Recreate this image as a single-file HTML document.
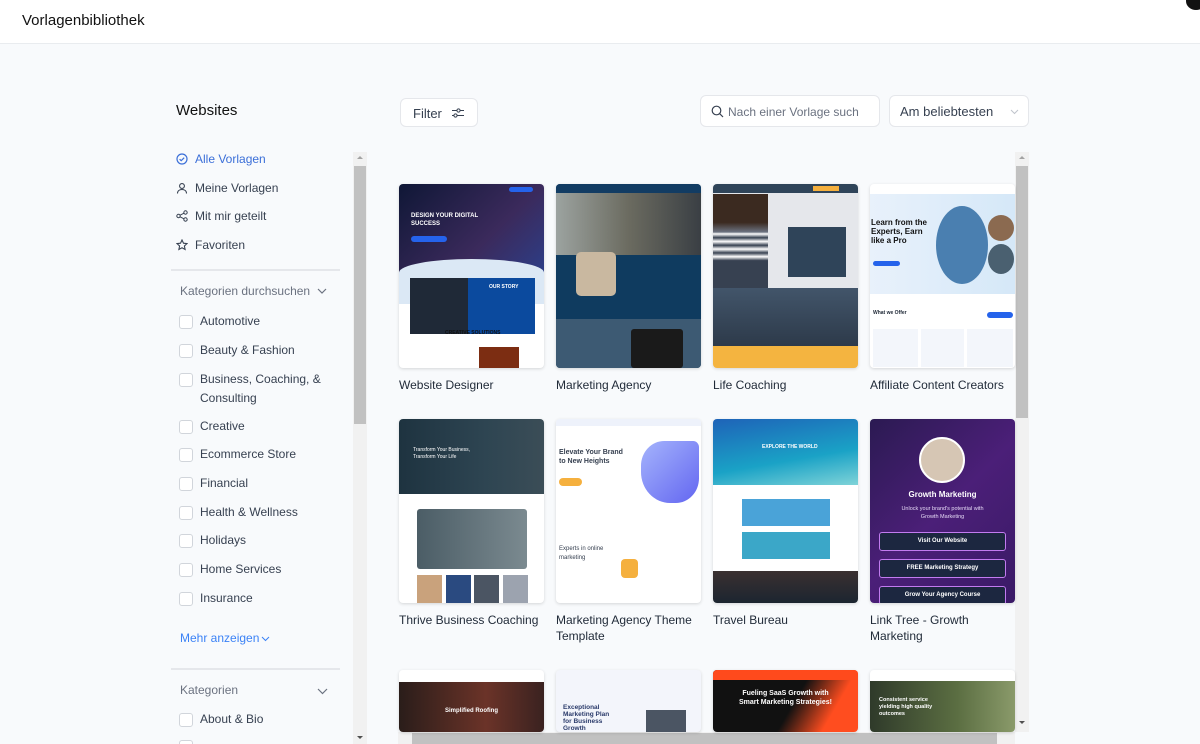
<!DOCTYPE html>
<html style="height:744px;overflow:hidden"><head><meta charset="utf-8"><style>
*{box-sizing:border-box;margin:0;padding:0}
html,body{overflow:hidden}
body{width:1200px;height:744px;background:#f8fafc;font-family:"Liberation Sans",sans-serif;color:#1f2937;position:relative}
.hdr{position:absolute;left:0;top:0;width:1200px;height:44px;background:#fff;border-bottom:1px solid #e9ecef}
.hdr span{position:absolute;left:22px;top:12px;font-size:15px;color:#111}
.abs{position:absolute}
.nav{position:absolute;left:176px;font-size:12px;color:#374151;display:flex;align-items:center;gap:7px}
.cb{position:absolute;left:179px;width:14px;height:14px;border:1px solid #d1d5db;border-radius:3px;background:#fff}
.cbl{position:absolute;left:200px;font-size:12px;color:#374151;line-height:19px}
.hr{position:absolute;left:171px;width:169px;height:2px;background:#e5e7eb}
.card{position:absolute;width:145px;height:184px;border-radius:4px;overflow:hidden;box-shadow:0 1px 3px rgba(0,0,0,.15)}
.lbl{position:absolute;font-size:12px;color:#1f2937;line-height:16px;width:150px}
.btn{position:absolute;background:#fff;border:1px solid #e5e7eb;border-radius:6px}
</style></head><body>
<div class="hdr"><span>Vorlagenbibliothek</span></div>
<div class="abs" style="left:1186px;top:-8px;width:20px;height:18px;border-radius:50%;background:#111"></div>

<div class="abs" style="left:176px;top:102px;font-size:15px;color:#111">Websites</div>
<div class="nav" style="top:152px;color:#3b6fd8"><svg width="12" height="12" viewBox="0 0 12 12"><circle cx="6" cy="6" r="5" fill="none" stroke="#3b6fd8" stroke-width="1.2"/><path d="M3.6 6.2l1.6 1.5 3-3" fill="none" stroke="#3b6fd8" stroke-width="1.2"/></svg>Alle Vorlagen</div>
<div class="nav" style="top:181px"><svg width="12" height="12" viewBox="0 0 12 12"><circle cx="6" cy="4" r="2.4" fill="none" stroke="#374151" stroke-width="1.1"/><path d="M1.5 11.5c0-2.6 2-4 4.5-4s4.5 1.4 4.5 4" fill="none" stroke="#374151" stroke-width="1.1"/></svg>Meine Vorlagen</div>
<div class="nav" style="top:209px"><svg width="12" height="12" viewBox="0 0 12 12"><circle cx="2.5" cy="6" r="1.7" fill="none" stroke="#374151"/><circle cx="9.5" cy="2.5" r="1.7" fill="none" stroke="#374151"/><circle cx="9.5" cy="9.5" r="1.7" fill="none" stroke="#374151"/><path d="M4 5.2l4-2M4 6.8l4 2" stroke="#374151"/></svg>Mit mir geteilt</div>
<div class="nav" style="top:238px"><svg width="12" height="12" viewBox="0 0 12 12"><path d="M6 1l1.5 3.2 3.5.4-2.6 2.4.7 3.5L6 8.8 2.9 10.5l.7-3.5L1 4.6l3.5-.4z" fill="none" stroke="#374151" stroke-width="1.1"/></svg>Favoriten</div>
<div class="hr" style="top:269px"></div>
<div class="abs" style="left:180px;top:284px;font-size:12px;color:#6b7280">Kategorien durchsuchen <svg width="10" height="8" viewBox="0 0 10 8" style="margin-left:4px"><path d="M1 2l4 4 4-4" fill="none" stroke="#6b7280" stroke-width="1.2"/></svg></div>
<div class="cb" style="top:315px"></div><div class="cbl" style="top:312px">Automotive</div>
<div class="cb" style="top:344px"></div><div class="cbl" style="top:341px">Beauty &amp; Fashion</div>
<div class="cb" style="top:373px"></div><div class="cbl" style="top:370px">Business, Coaching, &amp;<br>Consulting</div>
<div class="cb" style="top:420px"></div><div class="cbl" style="top:417px">Creative</div>
<div class="cb" style="top:448px"></div><div class="cbl" style="top:445px">Ecommerce Store</div>
<div class="cb" style="top:477px"></div><div class="cbl" style="top:474px">Financial</div>
<div class="cb" style="top:506px"></div><div class="cbl" style="top:503px">Health &amp; Wellness</div>
<div class="cb" style="top:534px"></div><div class="cbl" style="top:531px">Holidays</div>
<div class="cb" style="top:563px"></div><div class="cbl" style="top:560px">Home Services</div>
<div class="cb" style="top:592px"></div><div class="cbl" style="top:589px">Insurance</div>
<div class="abs" style="left:180px;top:631px;font-size:12px;color:#3b82f6">Mehr anzeigen<svg width="9" height="7" viewBox="0 0 9 7" style="margin-left:2px"><path d="M1 2l3.5 3.5L8 2" fill="none" stroke="#3b82f6"/></svg></div>
<div class="hr" style="top:668px"></div>
<div class="abs" style="left:180px;top:683px;font-size:12px;color:#6b7280">Kategorien</div>
<svg class="abs" style="left:317px;top:687px" width="11" height="8" viewBox="0 0 11 8"><path d="M1 2l4.5 4.5L10 2" fill="none" stroke="#6b7280" stroke-width="1.2"/></svg>
<div class="cb" style="top:713px"></div><div class="cbl" style="top:710px">About &amp; Bio</div>
<div class="cb" style="top:740px;height:4px;border-bottom:0;border-radius:3px 3px 0 0"></div>

<div class="abs" style="left:353px;top:152px;width:14px;height:592px;background:#f1f1f1"></div>
<div class="abs" style="left:354px;top:166px;width:12px;height:258px;background:#c1c1c1"></div>
<div class="abs" style="left:357px;top:156px;width:0;height:0;border:3px solid transparent;border-bottom-color:#a3a3a3;border-top:0"></div>
<div class="abs" style="left:357px;top:736px;width:0;height:0;border:3px solid transparent;border-top-color:#505050;border-bottom:0"></div>

<div class="btn" style="left:400px;top:98px;width:78px;height:29px"><span class="abs" style="left:12px;top:7px;font-size:13px;color:#374151">Filter</span><svg class="abs" style="left:50px;top:8px" width="14" height="12" viewBox="0 0 14 12"><path d="M1 3.5h5M9 3.5h4M1 8.5h2M6 8.5h7" stroke="#374151" stroke-width="1.1"/><circle cx="7.5" cy="3.5" r="1.6" fill="none" stroke="#374151"/><circle cx="4.5" cy="8.5" r="1.6" fill="none" stroke="#374151"/></svg></div>
<div class="btn" style="left:700px;top:95px;width:180px;height:32px;overflow:hidden"><svg class="abs" style="left:10px;top:9px" width="13" height="13" viewBox="0 0 13 13"><circle cx="5.5" cy="5.5" r="4.3" fill="none" stroke="#374151" stroke-width="1.2"/><path d="M8.6 8.6l3.4 3.4" stroke="#374151" stroke-width="1.2"/></svg><span class="abs" style="left:27px;top:9px;font-size:12px;color:#6b7280;white-space:nowrap">Nach einer Vorlage such</span></div>
<div class="btn" style="left:889px;top:95px;width:140px;height:32px"><span class="abs" style="left:10px;top:8px;font-size:13px;color:#374151">Am beliebtesten</span><svg class="abs" style="left:120px;top:13px" width="9" height="6" viewBox="0 0 9 6"><path d="M1 1l3.5 3.5L8 1" fill="none" stroke="#c0c4cc"/></svg></div>

<div class="abs" style="left:1015px;top:152px;width:14px;height:580px;background:#f1f1f1"></div>
<div class="abs" style="left:1016px;top:166px;width:12px;height:252px;background:#c1c1c1"></div>
<div class="abs" style="left:1019px;top:156px;border:3px solid transparent;border-bottom-color:#a3a3a3;border-top:0"></div>
<div class="abs" style="left:1019px;top:721px;border:3px solid transparent;border-top-color:#505050;border-bottom:0"></div>
<div class="abs" style="left:398px;top:732px;width:617px;height:12px;background:#f1f1f1"></div>
<div class="abs" style="left:412px;top:733px;width:585px;height:11px;background:#c1c1c1"></div>

<div class="card" style="left:399px;top:184px;background:#fff">
 <div class="abs" style="left:0;top:0;width:145px;height:95px;background:linear-gradient(135deg,#0f1736,#3b2a5c 60%,#2c3f8a)"></div>
 <div class="abs" style="left:0;top:75px;width:145px;height:45px;background:#dbe8f5;border-radius:50% 50% 0 0/30% 30% 0 0"></div>
 <div class="abs" style="left:12px;top:28px;font-size:6px;color:#fff;font-weight:bold;line-height:8px">DESIGN YOUR DIGITAL<br>SUCCESS</div>
 <div class="abs" style="left:12px;top:52px;width:36px;height:6px;background:#2563eb;border-radius:3px"></div>
 <div class="abs" style="left:110px;top:3px;width:24px;height:5px;background:#2563eb;border-radius:3px"></div>
 <div class="abs" style="left:11px;top:94px;width:125px;height:56px;background:#0b4a9e"></div>
 <div class="abs" style="left:11px;top:94px;width:58px;height:56px;background:#1f2937"></div>
 <div class="abs" style="left:90px;top:100px;font-size:5px;color:#fff;font-weight:bold">OUR STORY</div>
 <div class="abs" style="left:46px;top:146px;font-size:5px;color:#111;font-weight:bold">CREATIVE SOLUTIONS</div>
 <div class="abs" style="left:80px;top:163px;width:40px;height:21px;background:#7c2d12"></div>
</div>
<div class="card" style="left:556px;top:184px;background:#0f3b5f">
 <div class="abs" style="left:0;top:0;width:145px;height:9px;background:#123c63"></div>
 <div class="abs" style="left:0;top:9px;width:145px;height:62px;background:linear-gradient(90deg,#9ca3a0,#6b6b60 50%,#3a3f44)"></div>
 <div class="abs" style="left:20px;top:68px;width:40px;height:44px;background:#c9b8a0;border-radius:5px"></div>
 <div class="abs" style="left:0;top:135px;width:145px;height:49px;background:#3d5a73"></div>
 <div class="abs" style="left:75px;top:145px;width:52px;height:39px;background:#1a1a1a;border-radius:3px"></div>
</div>
<div class="card" style="left:713px;top:184px;background:#e5e7eb">
 <div class="abs" style="left:0;top:0;width:145px;height:9px;background:#2f4459"></div>
 <div class="abs" style="left:100px;top:2px;width:26px;height:5px;background:#f5b03e"></div>
 <div class="abs" style="left:0;top:10px;width:55px;height:95px;background:linear-gradient(#3b2a20 30%,#6b7280 40%,#fff 42%,#374151 46%,#fff 50%,#374151 54%,#fff 58%,#374151 62%,#fff 66%,#374151 70%)"></div>
 <div class="abs" style="left:75px;top:43px;width:58px;height:50px;background:#2f4459"></div>
 <div class="abs" style="left:0;top:104px;width:145px;height:58px;background:linear-gradient(#42556a,#2d3a4a)"></div>
 <div class="abs" style="left:0;top:162px;width:145px;height:22px;background:#f4b440"></div>
</div>
<div class="card" style="left:870px;top:184px;background:#fff">
 <div class="abs" style="left:0;top:10px;width:145px;height:100px;background:linear-gradient(90deg,#e8f1fb,#d5e8f8)"></div>
 <div class="abs" style="left:1px;top:34px;font-size:8px;font-weight:bold;color:#111;line-height:9px">Learn from the<br>Experts, Earn<br>like a Pro</div>
 <div class="abs" style="left:3px;top:77px;width:27px;height:5px;background:#2563eb;border-radius:3px"></div>
 <div class="abs" style="left:66px;top:22px;width:52px;height:78px;background:#4a7fb0;border-radius:50%"></div>
 <div class="abs" style="left:118px;top:31px;width:26px;height:26px;background:#8b6a50;border-radius:50%"></div>
 <div class="abs" style="left:118px;top:60px;width:26px;height:30px;background:#4a6070;border-radius:50%"></div>
 <div class="abs" style="left:3px;top:126px;font-size:5px;font-weight:bold">What we Offer</div>
 <div class="abs" style="left:117px;top:128px;width:26px;height:6px;background:#2563eb;border-radius:3px"></div>
 <div class="abs" style="left:3px;top:145px;width:45px;height:38px;background:#f3f6fb"></div>
 <div class="abs" style="left:51px;top:145px;width:43px;height:38px;background:#f3f6fb"></div>
 <div class="abs" style="left:97px;top:145px;width:46px;height:38px;background:#f3f6fb"></div>
</div>
<div class="lbl" style="left:399px;top:377px">Website Designer</div>
<div class="lbl" style="left:556px;top:377px">Marketing Agency</div>
<div class="lbl" style="left:713px;top:377px">Life Coaching</div>
<div class="lbl" style="left:870px;top:377px">Affiliate Content Creators</div>

<div class="card" style="left:399px;top:419px;background:#fff">
 <div class="abs" style="left:0;top:0;width:145px;height:75px;background:linear-gradient(90deg,#1e3340,#2e4552 60%,#3b4d57)"></div>
 <div class="abs" style="left:14px;top:28px;font-size:5px;color:#fff;line-height:7px">Transform Your Business,<br>Transform Your Life</div>
 <div class="abs" style="left:18px;top:90px;width:110px;height:60px;background:linear-gradient(90deg,#4b5d66,#7b8a90);border-radius:3px"></div>
 <div class="abs" style="left:18px;top:156px;width:25px;height:28px;background:#c9a27c"></div>
 <div class="abs" style="left:47px;top:156px;width:25px;height:28px;background:#2a4a80"></div>
 <div class="abs" style="left:75px;top:156px;width:25px;height:28px;background:#4b5563"></div>
 <div class="abs" style="left:104px;top:156px;width:25px;height:28px;background:#9ca3af"></div>
</div>
<div class="card" style="left:556px;top:419px;background:#fff">
 <div class="abs" style="left:0;top:0;width:145px;height:7px;background:#eef2fb"></div>
 <div class="abs" style="left:3px;top:29px;font-size:7px;font-weight:bold;color:#374151;line-height:9px">Elevate Your Brand<br>to New Heights</div>
 <div class="abs" style="left:3px;top:59px;width:23px;height:8px;background:#f5b03e;border-radius:4px"></div>
 <div class="abs" style="left:85px;top:22px;width:58px;height:62px;background:linear-gradient(135deg,#a5b4fc,#6366f1);border-radius:40% 10% 40% 50%"></div>
 <div class="abs" style="left:3px;top:126px;font-size:6px;color:#374151;line-height:9px">Experts in online<br>marketing</div>
 <div class="abs" style="left:65px;top:140px;width:17px;height:19px;background:#f5b03e;border-radius:4px"></div>
</div>
<div class="card" style="left:713px;top:419px;background:#fff">
 <div class="abs" style="left:0;top:0;width:145px;height:66px;background:linear-gradient(170deg,#1e63b8,#1aa2c6 60%,#7fd3d8)"></div>
 <div class="abs" style="left:49px;top:25px;font-size:5px;color:#fff;font-weight:bold">EXPLORE THE WORLD</div>
 <div class="abs" style="left:29px;top:80px;width:88px;height:60px;background:linear-gradient(#4aa3d8 0 45%,#fff 45% 55%,#3ba7c8 55%)"></div>
 <div class="abs" style="left:0;top:152px;width:145px;height:32px;background:linear-gradient(#3a3030,#1c2530)"></div>
</div>
<div class="card" style="left:870px;top:419px;background:linear-gradient(135deg,#2b1a52,#4b1f78 50%,#3a1a66)">
 <div class="abs" style="left:49px;top:18px;width:46px;height:46px;border-radius:50%;background:#d6c6b4;border:2px solid #fff"></div>
 <div class="abs" style="left:0;top:71px;width:145px;text-align:center;font-size:8px;color:#fff;font-weight:bold">Growth Marketing</div>
 <div class="abs" style="left:0;top:86px;width:145px;text-align:center;font-size:5.5px;color:#e5d8f5;line-height:8px">Unlock your brand's potential with<br>Growth Marketing</div>
 <div class="abs" style="left:9px;top:113px;width:127px;height:19px;background:#1c2740;border:1.5px solid #c27bf0;border-radius:3px;color:#fff;font-size:6px;font-weight:bold;text-align:center;line-height:16px">Visit Our Website</div>
 <div class="abs" style="left:9px;top:140px;width:127px;height:19px;background:#1c2740;border:1.5px solid #c27bf0;border-radius:3px;color:#fff;font-size:6px;font-weight:bold;text-align:center;line-height:16px">FREE Marketing Strategy</div>
 <div class="abs" style="left:9px;top:167px;width:127px;height:19px;background:#1c2740;border:1.5px solid #c27bf0;border-radius:3px;color:#fff;font-size:6px;font-weight:bold;text-align:center;line-height:16px">Grow Your Agency Course</div>
</div>
<div class="lbl" style="left:399px;top:612px">Thrive Business Coaching</div>
<div class="lbl" style="left:556px;top:612px">Marketing Agency Theme<br>Template</div>
<div class="lbl" style="left:713px;top:612px">Travel Bureau</div>
<div class="lbl" style="left:870px;top:612px">Link Tree - Growth<br>Marketing</div>

<div class="card" style="left:399px;top:670px;height:62px;background:#fff">
 <div class="abs" style="left:0;top:12px;width:145px;height:50px;background:linear-gradient(90deg,#2a1d1a,#6b3328 60%,#3a2220)"></div>
 <div class="abs" style="left:0;top:38px;width:145px;text-align:center;font-size:6px;color:#fff;font-weight:bold">Simplified Roofing</div>
</div>
<div class="card" style="left:556px;top:670px;height:62px;background:#f3f5fb">
 <div class="abs" style="left:7px;top:34px;font-size:6.5px;color:#2a3a6a;font-weight:bold;line-height:7px">Exceptional<br>Marketing Plan<br>for Business<br>Growth</div>
 <div class="abs" style="left:90px;top:40px;width:40px;height:22px;background:#4b5563"></div>
</div>
<div class="card" style="left:713px;top:670px;height:62px;background:linear-gradient(120deg,#111 55%,#ff4d1f 80%)">
 <div class="abs" style="left:0;top:0;width:145px;height:10px;background:#ff4a1c"></div>
 <div class="abs" style="left:0;top:19px;width:145px;text-align:center;font-size:7px;color:#fff;font-weight:bold;line-height:9px">Fueling SaaS Growth with<br>Smart Marketing Strategies!</div>
</div>
<div class="card" style="left:870px;top:670px;height:62px;background:#fff">
 <div class="abs" style="left:0;top:11px;width:145px;height:51px;background:linear-gradient(90deg,#2f3a2a,#5b6e42 60%,#8a9a6a)"></div>
 <div class="abs" style="left:9px;top:27px;font-size:5.5px;color:#fff;font-weight:bold;line-height:7px">Consistent service<br>yielding high quality<br>outcomes</div>
</div>
</body></html>
